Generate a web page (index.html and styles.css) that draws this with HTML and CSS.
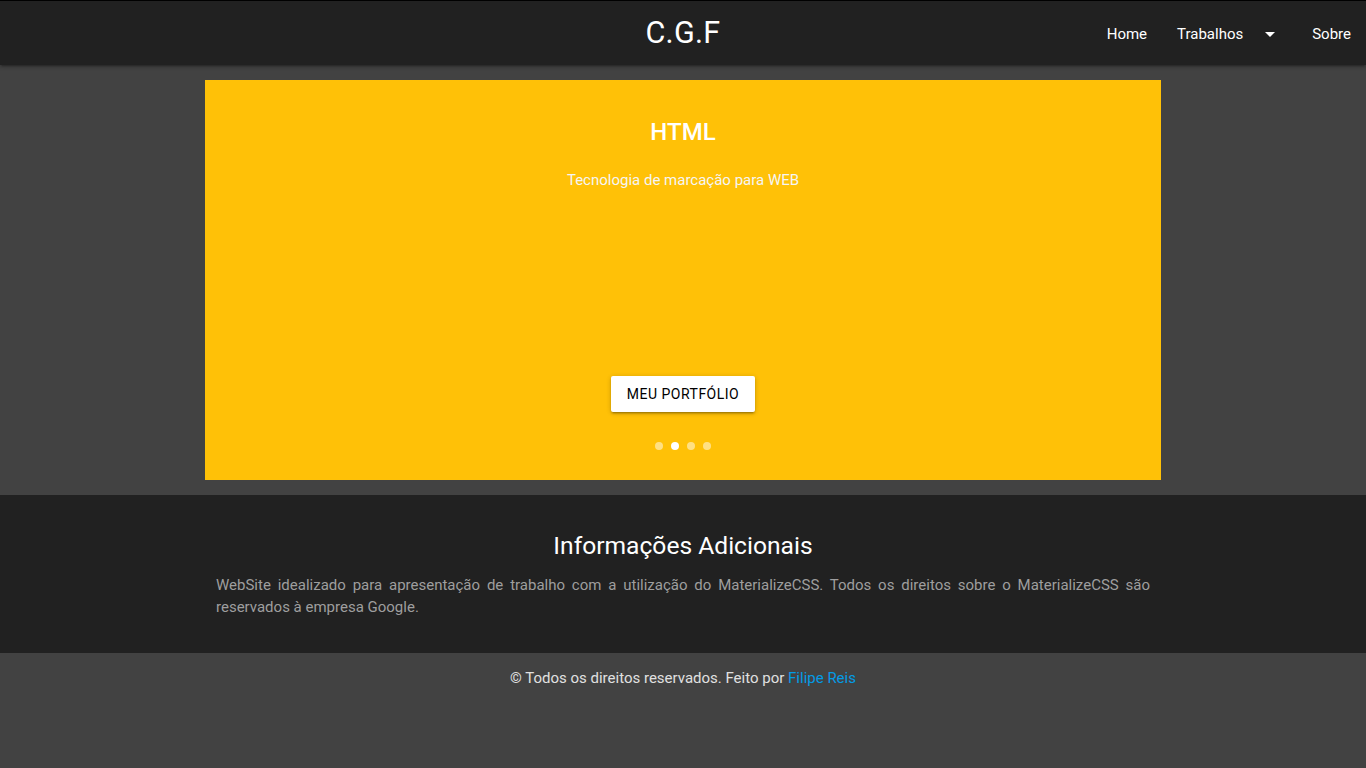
FILE: index.html
```html
<!DOCTYPE html>
<html lang="pt-BR">
<head>
<meta charset="utf-8">
<title>C.G.F</title>
<link rel="stylesheet" href="styles.css">
</head>
<body>
<nav class="navbar">
  <div class="nav-side"></div>
  <a class="brand" href="#">C.G.F</a>
  <ul class="nav-links">
    <li><a href="#">Home</a></li>
    <li><a href="#" class="dropdown">Trabalhos<svg class="caret" viewBox="0 0 24 24" width="24" height="24"><path d="M7 10l5 5 5-5z" fill="#fff"/></svg></a></li>
    <li><a href="#">Sobre</a></li>
  </ul>
</nav>

<main class="main">
  <section class="slider">
    <h3 class="slide-title">HTML</h3>
    <p class="slide-caption">Tecnologia de marcação para WEB</p>
    <a href="#" class="btn">MEU PORTFÓLIO</a>
    <ul class="indicators">
      <li class="dot"></li>
      <li class="dot active"></li>
      <li class="dot"></li>
      <li class="dot"></li>
    </ul>
  </section>
</main>

<footer class="footer">
  <div class="container">
    <h5 class="footer-title">Informações Adicionais</h5>
    <p class="footer-text">WebSite idealizado para apresentação de trabalho com a utilização do MaterializeCSS. Todos os direitos sobre o MaterializeCSS são reservados à empresa Google.</p>
  </div>
</footer>
<div class="copyright">© Todos os direitos reservados. Feito por <a href="#">Filipe Reis</a></div>
</body>
</html>
```
FILE: styles.css
```css
* { box-sizing: border-box; }
html, body { margin: 0; padding: 0; }
body {
  background: #424242;
  font-family: Roboto, "Liberation Sans", sans-serif;
  color: #fff;
  min-height: 768px;
}
a { text-decoration: none; }

.navbar {
  position: relative;
  z-index: 2;
  height: 65px;
  border-top: 1px solid #000;
  background: #212121;
  display: grid;
  grid-template-columns: 1fr auto 1fr;
  align-items: center;
  box-shadow: 0 2px 2px 0 rgba(0,0,0,.14), 0 3px 1px -2px rgba(0,0,0,.12), 0 1px 5px 0 rgba(0,0,0,.2);
}
.brand {
  color: #fff;
  font-size: 30.5px;
  line-height: 64px;
  padding-bottom: 1px;
  letter-spacing: 0.3px;
}
.nav-links {
  list-style: none;
  margin: 0;
  padding: 0;
  display: flex;
  justify-content: flex-end;
  height: 64px;
}
.nav-links a {
  display: flex;
  align-items: center;
  height: 64px;
  padding: 0 15px;
  color: #fff;
  font-size: 15px;
}
.caret { margin-left: 15px; display: block; }

.main {
  padding: 15px 0;
}
.slider {
  width: 956px;
  height: 400px;
  margin: 0 auto;
  background: #ffc107;
  display: flex;
  flex-direction: column;
  align-items: center;
  padding: 37px 0 30px;
}
.slide-title {
  margin: 0;
  font-size: 24px;
  line-height: 30px;
  font-weight: 500;
  color: #fff;
}
.slide-caption {
  margin: 22px 0 0;
  font-size: 15px;
  line-height: 22px;
  color: #f5f5f5;
}
.btn {
  margin-top: auto;
  height: 36px;
  line-height: 36px;
  padding: 0 16px;
  background: #fff;
  color: #000;
  font-size: 14px;
  letter-spacing: .5px;
  border-radius: 2px;
  box-shadow: 0 2px 2px 0 rgba(0,0,0,.14), 0 3px 1px -2px rgba(0,0,0,.12), 0 1px 5px 0 rgba(0,0,0,.2);
}
.indicators {
  list-style: none;
  margin: 30px 0 0;
  padding: 0;
  display: flex;
  gap: 8px;
}
.dot {
  width: 8px;
  height: 8px;
  border-radius: 50%;
  background: rgba(255,255,255,.5);
}
.dot.active { background: #fff; }

.footer {
  background: #212121;
  height: 158px;
  padding-top: 36px;
}
.container {
  width: 956px;
  margin: 0 auto;
  padding: 0 11px;
}
.footer-title {
  margin: 0;
  text-align: center;
  font-size: 24.6px;
  line-height: 30px;
  font-weight: 400;
  color: #fff;
}
.footer-text {
  margin: 13px 0 0;
  font-size: 15px;
  line-height: 22px;
  text-align: justify;
  color: #9e9e9e;
}
.copyright {
  text-align: center;
  line-height: 50px;
  font-size: 15px;
  color: #e0e0e0;
}
.copyright a { color: #039be5; }
```
